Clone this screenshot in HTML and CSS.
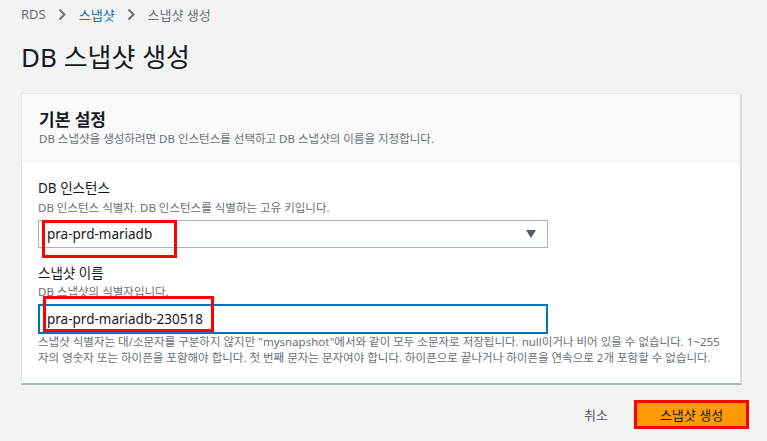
FILE: index.html
```html
<!DOCTYPE html>
<html lang="ko">
<head>
<meta charset="utf-8">
<link rel="stylesheet" href="styles.css">
</head>
<body>
<nav class="crumbs">
  <span class="crumb">RDS</span>
  <svg class="chev" width="9" height="13" viewBox="0 0 9 13"><path d="M1.5 1.5 L6.5 6.5 L1.5 11.5" fill="none" stroke="#687078" stroke-width="2"/></svg>
  <a class="crumb link">스냅샷</a>
  <svg class="chev" width="9" height="13" viewBox="0 0 9 13"><path d="M1.5 1.5 L6.5 6.5 L1.5 11.5" fill="none" stroke="#687078" stroke-width="2"/></svg>
  <span class="crumb">스냅샷 생성</span>
</nav>
<h1 class="title">DB 스냅샷 생성</h1>
<section class="card">
  <header class="card-head">
    <h2 class="card-title">기본 설정</h2>
    <p class="card-desc">DB 스냅샷을 생성하려면 DB 인스턴스를 선택하고 DB 스냅샷의 이름을 지정합니다.</p>
  </header>
  <div class="card-body">
    <div class="field">
      <div class="label">DB 인스턴스</div>
      <div class="desc">DB 인스턴스 식별자. DB 인스턴스를 식별하는 고유 키입니다.</div>
      <div class="select">
        <span>pra-prd-mariadb</span>
        <svg class="caret" width="10" height="8" viewBox="0 0 10 8"><path d="M0 0 H10 L5 8 Z" fill="#545b64"/></svg>
        <div class="mark mark-1"></div>
      </div>
    </div>
    <div class="field second">
      <div class="label">스냅샷 이름</div>
      <div class="desc">DB 스냅샷의 식별자입니다.</div>
      <div class="input">
        <span>pra-prd-mariadb-230518</span>
        <div class="mark mark-2"></div>
      </div>
      <p class="help">스냅샷 식별자는 대/소문자를 구분하지 않지만 "mysnapshot"에서와 같이 모두 소문자로 저장됩니다. null이거나 비어 있을 수 없습니다. 1~255<br>자의 영숫자 또는 하이픈을 포함해야 합니다. 첫 번째 문자는 문자여야 합니다. 하이픈으로 끝나거나 하이픈을 연속으로 2개 포함할 수 없습니다.</p>
    </div>
  </div>
</section>
<div class="actions">
  <span class="cancel">취소</span>
  <span class="primary">스냅샷 생성</span>
</div>
</body>
</html>
```
FILE: styles.css
```css
html, body {
  margin: 0;
  padding: 0;
}
body {
  background: #f2f3f3;
  font-family: "Noto Sans", "Noto Sans CJK KR", sans-serif;
  color: #16191f;
  padding: 0 26px 0 21px;
  width: 720px;
}
.crumbs {
  height: 28px;
  display: flex;
  align-items: center;
  gap: 12px;
  font-size: 13px;
  color: #687078;
}
.crumb.link {
  color: #0073bb;
}
.chev {
  display: block;
}
.title {
  margin: 14px 0 0;
  font-size: 26px;
  line-height: 30px;
  font-weight: 400;
  color: #16191f;
}
.card {
  margin-top: 21px;
  background: #fff;
  border: 1px solid #e4e7e7;
  border-bottom: 2px solid #aab7b8;
  border-right: 2px solid #d5dbdb;
  box-sizing: border-box;
  width: 721px;
}
.card-head {
  background: #fafafa;
  padding: 15px 16px 14px 17px;
  border-bottom: 1px solid #f0f1f1;
}
.card-title {
  margin: 0;
  font-size: 17px;
  line-height: 22px;
  font-weight: 700;
}
.card-desc {
  margin: 0;
  font-size: 11.5px;
  line-height: 16px;
  color: #687078;
}
.card-body {
  padding: 16px 16px 17px 16px;
}
.field.second {
  margin-top: 15px;
}
.label {
  font-size: 13.5px;
  line-height: 20px;
  color: #16191f;
}
.desc {
  margin-top: 2px;
  font-size: 11.5px;
  line-height: 16px;
  color: #687078;
}
.field.second .desc {
  margin-top: 1px;
}
.select, .input {
  position: relative;
  margin-top: 4px;
  width: 510px;
  box-sizing: border-box;
  display: flex;
  align-items: center;
  font-size: 13.5px;
  color: #16191f;
}
.select {
  height: 28px;
  border: 1px solid #aab7b8;
  padding: 0 11px 0 8px;
  justify-content: space-between;
}
.input {
  height: 30px;
  border: 2px solid #0073bb;
  padding: 0 7px;
}
.mark {
  position: absolute;
  border: 3px solid #ff0000;
  box-sizing: border-box;
}
.mark-1 {
  left: 3px;
  top: -1px;
  width: 135px;
  height: 38px;
}
.mark-2 {
  left: 3px;
  top: -10px;
  width: 171px;
  height: 36px;
}
.help {
  margin: 0;
  font-size: 11.5px;
  line-height: 16px;
  color: #687078;
  white-space: nowrap;
}
.actions {
  margin-top: 15px;
  width: 728px;
  display: flex;
  justify-content: flex-end;
  align-items: center;
  gap: 26px;
}
.cancel {
  font-size: 13px;
  color: #545b64;
}
.primary {
  display: flex;
  align-items: center;
  justify-content: center;
  width: 115px;
  height: 29px;
  box-sizing: border-box;
  background: #ff9900;
  border: 3px solid #ff0000;
  font-size: 13px;
  color: #16191f;
}
```
